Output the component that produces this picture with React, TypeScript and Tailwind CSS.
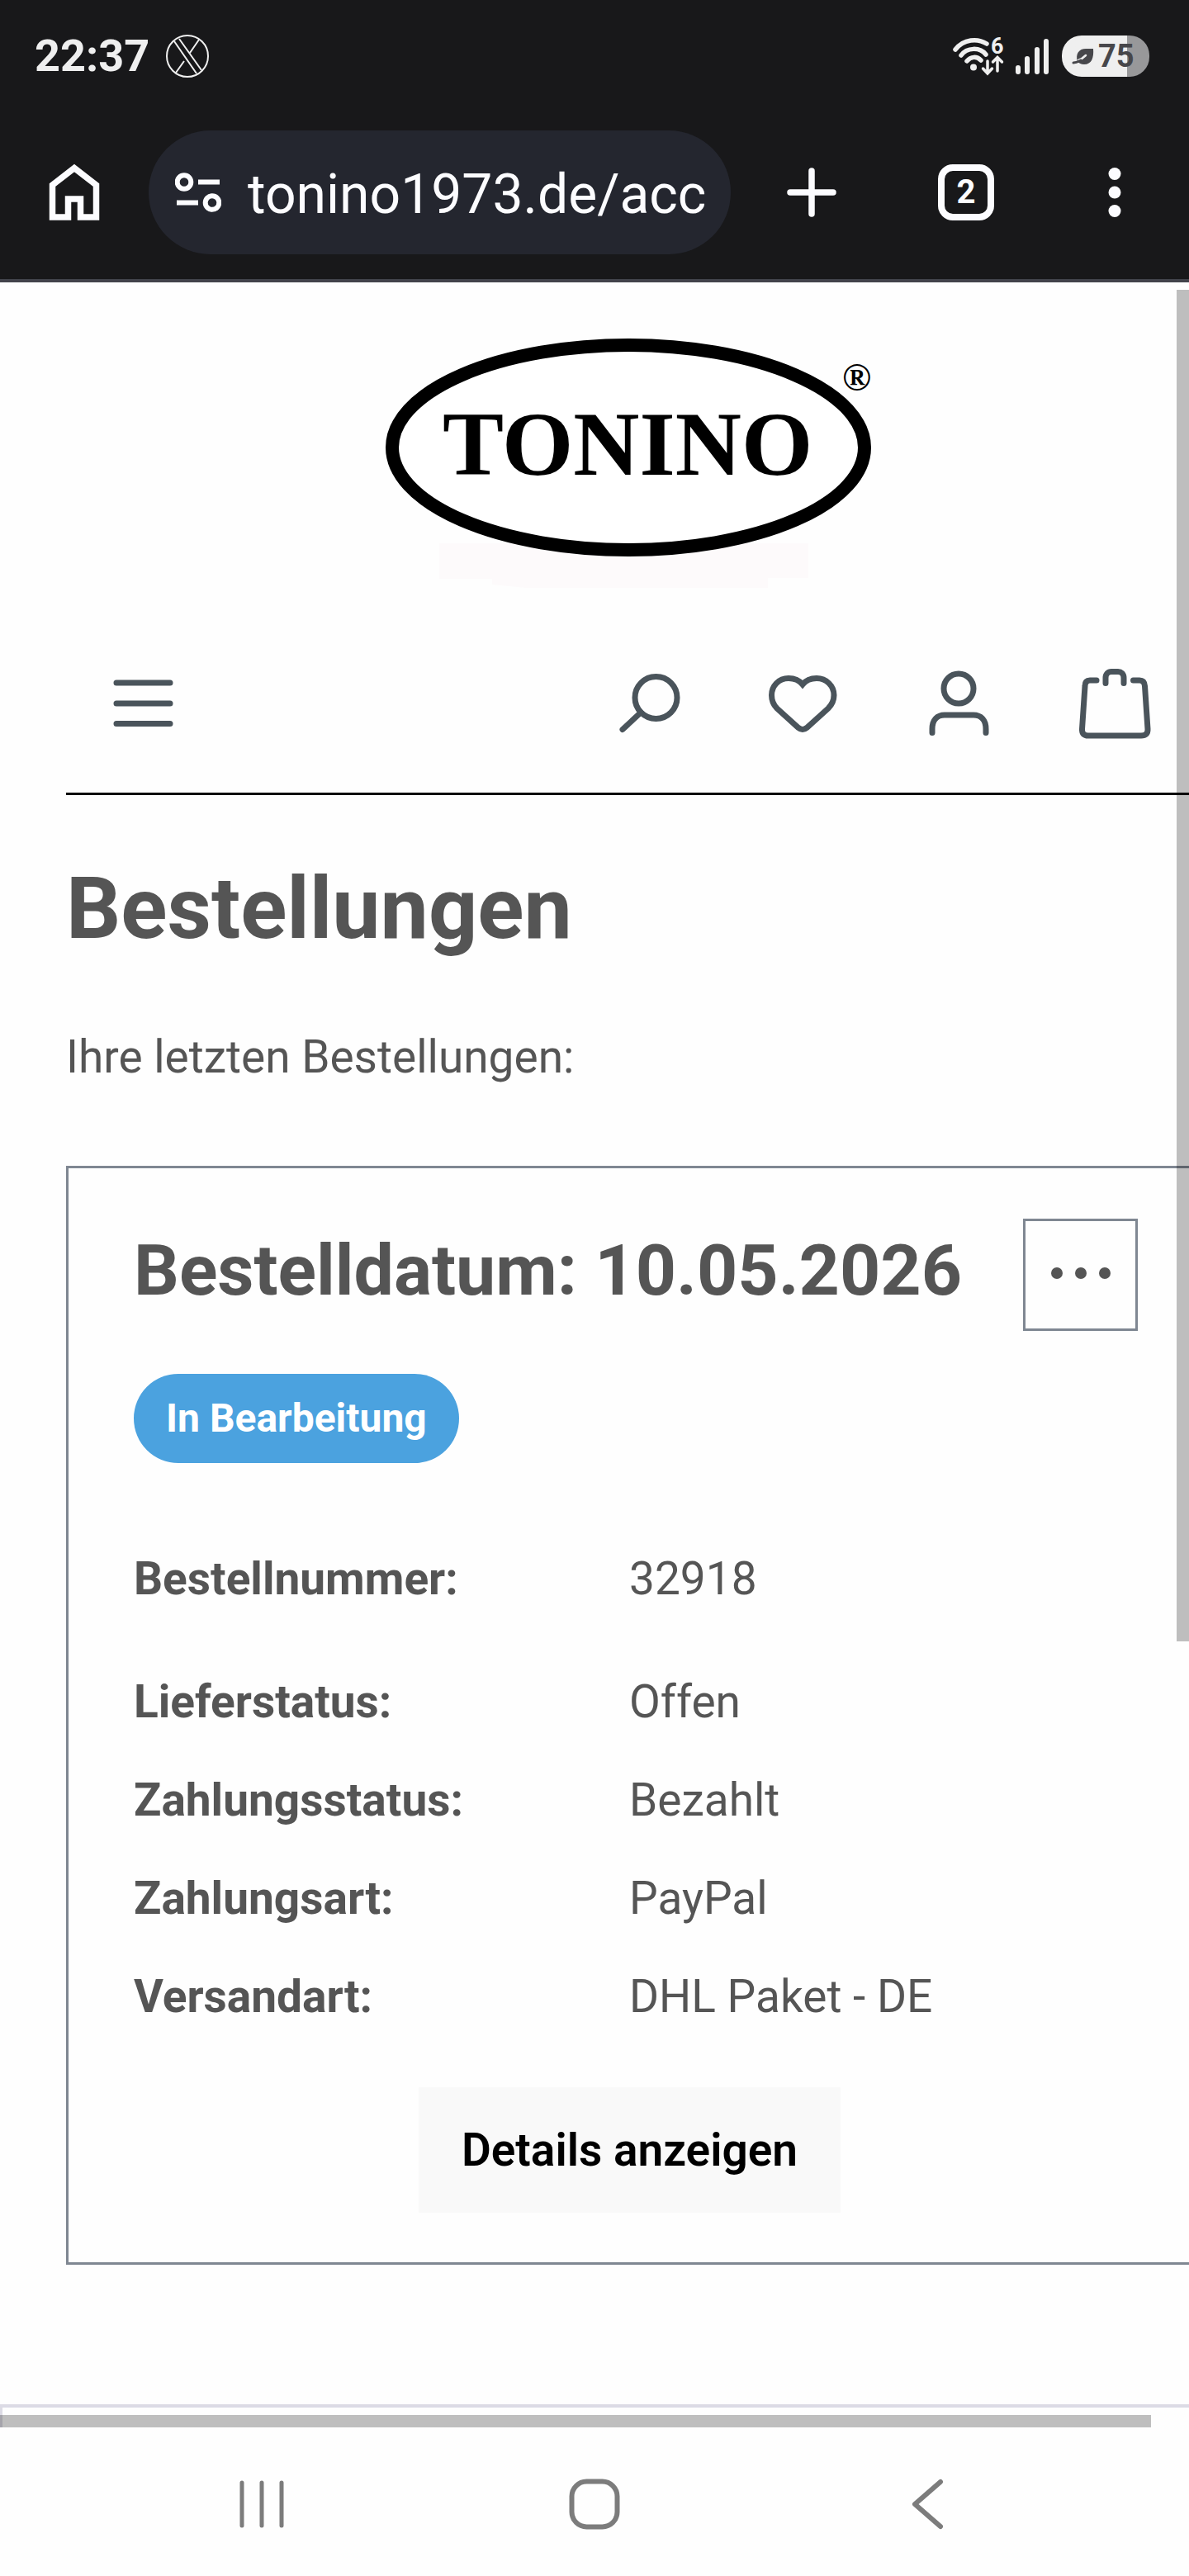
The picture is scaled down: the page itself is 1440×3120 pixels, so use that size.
const details = [
  { label: "Lieferstatus:", value: "Offen" },
  { label: "Zahlungsstatus:", value: "Bezahlt" },
  { label: "Zahlungsart:", value: "PayPal" },
  { label: "Versandart:", value: "DHL Paket - DE" },
];

const StatusBar = () => {
  return (
    <div className="flex h-32 items-center justify-between bg-[#18181a] pt-2 pr-12 pl-[42px] text-[#efefef]">
      <div className="flex items-center gap-5">
        <span className="text-[54px] leading-[64px] font-bold">22:37</span>
        <svg className="size-[52px]" viewBox="0 0 52 52" fill="none" stroke="currentColor" strokeWidth="2">
          <circle cx="26" cy="26" r="25" />
          <path d="M10 8 L37 47 M16 5 L43 43 M40 6 L29 22 M12 46 L22 32" />
        </svg>
      </div>

      <div className="flex items-center gap-[15px]">
        {/* Wifi + signal */}
        <div className="flex items-center gap-2">
          <svg className="h-16 w-[68px]" viewBox="0 -8 68 64" fill="none" stroke="currentColor" strokeWidth="5.5" strokeLinecap="round">
            <path d="M4 16 C14 3 31 2 42 9" />
            <path d="M11 23 C18 13 34 13 41 22" />
            <path d="M18 30 C23 24 30 24 35 29" />
            <circle cx="26" cy="37.5" r="4" fill="currentColor" stroke="none" />
            <path d="M43 30 V44 M37.5 39 L43 45 L48.5 39" strokeWidth="3.5" />
            <path d="M55 42 V27 M49.5 31 L55 25.5 L60.5 31" strokeWidth="3.5" />
            <text x="47" y="21" fill="currentColor" stroke="none" fontSize="27" fontWeight="700">6</text>
          </svg>
          <svg className="h-12 w-[42px]" viewBox="0 0 42 48" stroke="currentColor" strokeWidth="6" strokeLinecap="round">
            <path d="M4 38 V43 M15 27 V43 M27 16 V43 M38 6 V43" />
          </svg>
        </div>

        {/* Battery */}
        <div className="flex h-[50px] w-[106px] items-center gap-1 rounded-3xl bg-linear-to-r from-[#efefef] from-75% to-[#98989a] to-75% pl-3 text-[#47474b]">
          <svg className="h-6 w-7" viewBox="0 0 28 24" fill="currentColor">
            <path d="M26 3 C27 14 24 22 15 22 C11 22 9 20 7 19 C4 9 9 3 17 3 Z" />
            <path d="M17 11 C14 14 11 16 8 17" fill="none" stroke="#efefef" strokeWidth="2.5" strokeLinecap="round" />
            <path d="M2 20 C6 20 9 18 11 17" fill="none" stroke="currentColor" strokeWidth="3" strokeLinecap="round" />
          </svg>
          <span className="text-[38px] leading-[48px] font-bold">75</span>
        </div>
      </div>
    </div>
  );
};

const BrowserBar = () => {
  return (
    <div className="flex h-[214px] items-center border-b-4 border-[#42434b] bg-[#18181a] text-[#fcfcff]">
      <button aria-label="Startseite" className="flex w-[180px] shrink-0 justify-center">
        <svg className="size-[72px]" viewBox="0 0 72 72" fill="none" stroke="currentColor" strokeWidth="7.5">
          <path d="M9.5 66 V27 L36 6.5 L62.5 27 V66 H43.5 V44 H28.5 V66 Z" />
        </svg>
      </button>

      <div className="flex h-[150px] min-w-0 flex-1 items-center gap-8 rounded-full bg-[#24262f] pr-6 pl-8">
        <svg className="size-14 shrink-0" viewBox="0 0 56 56" fill="none" stroke="currentColor" strokeWidth="6">
          <circle cx="11" cy="15.5" r="8.3" />
          <circle cx="45" cy="40.5" r="8.3" />
          <path d="M28 15.5 H54 M2 40.5 H28" />
        </svg>
        <input
          aria-label="Adresse"
          defaultValue="tonino1973.de/acc"
          className="h-24 w-full min-w-0 bg-transparent pt-1 text-[66px] outline-none"
        />
      </div>

      <button aria-label="Neuer Tab" className="flex w-[196px] shrink-0 justify-center">
        <svg className="size-16" viewBox="0 0 64 64" stroke="currentColor" strokeWidth="7.5" strokeLinecap="round">
          <path d="M32 6 V58 M6 32 H58" />
        </svg>
      </button>
      <button aria-label="Tabs" className="flex w-[178px] shrink-0 justify-center">
        <span className="flex size-[68px] items-center justify-center rounded-[18px] border-8 border-current text-[40px] leading-[48px] font-bold">
          2
        </span>
      </button>
      <button aria-label="Menü" className="flex w-[181px] shrink-0 justify-center">
        <svg className="size-16" viewBox="0 0 64 64" fill="currentColor">
          <circle cx="32" cy="9.5" r="7.5" />
          <circle cx="32" cy="32" r="7.5" />
          <circle cx="32" cy="54.5" r="7.5" />
        </svg>
      </button>
    </div>
  );
};

const Logo = () => {
  return (
    <svg className="h-80 w-[604px]" viewBox="460 400 604 320" role="img" aria-label="Tonino">
      <path d="M533 658 H980 V700 H931 V712 H638 L597 708 V701 H533 Z" fill="#fdfafb" />
      <ellipse cx="762" cy="542" rx="286" ry="124" fill="#fff" stroke="#000" strokeWidth="16" />
      <text x="537" y="575" fontFamily="'Liberation Serif', serif" fontWeight="700" fontSize="111">TONINO</text>
      <text x="1021" y="473" fontFamily="'Liberation Serif', serif" fontWeight="700" fontSize="47">®</text>
    </svg>
  );
};

const ShopButton = ({ label, children }: any) => {
  return (
    <button aria-label={label} className="flex w-[124px] justify-center">
      <svg
        className="size-24"
        viewBox="0 0 96 96"
        fill="none"
        stroke="currentColor"
        strokeWidth="7"
        strokeLinecap="round"
        strokeLinejoin="round"
      >
        {children}
      </svg>
    </button>
  );
};

const ShopNav = () => {
  return (
    <nav className="ml-20 flex h-[243px] items-center justify-between border-b-[3px] border-black pt-6 pr-7 pl-8 text-[#4a545b]">
      <ShopButton label="Menü">
        <path d="M15 23 H80 M15 48 H80 M15 72.5 H80" />
      </ShopButton>
      <div className="flex gap-16">
        <ShopButton label="Suchen">
          <circle cx="56.5" cy="41" r="25.5" />
          <path d="M38 59 L16 79.5" />
        </ShopButton>
        <ShopButton label="Merkzettel">
          <path
            strokeLinejoin="miter"
            d="M46 25 C42 20 36 17.5 29 17.5 C17 17.5 8.5 27 8.5 38 C8.5 45 11 50 15 54 L41 77.5 Q46 81.5 51 77.5 L77 54 C81 50 84 45 84 38 C84 27 75 17.5 63 17.5 C56 17.5 50 20 46 25 Z"
          />
        </ShopButton>
        <ShopButton label="Mein Konto">
          <circle cx="47" cy="30" r="18" />
          <path d="M15 83.5 V79 C15 68 21 62 30 62 H65 C74 62 80 68 80 79 V83.5" />
        </ShopButton>
        <ShopButton label="Warenkorb">
          <path d="M26 20 H18 Q12 20 12 27 L8.5 79 Q8 87 16 87 H80 Q88.5 87 88 79 L84.5 27 Q84 20 78 20 H70.5" />
          <path d="M37 23.5 V17 C37 12 40 9.5 44 9.5 H52 C56 9.5 59 12 59 17 V23.5" />
        </ShopButton>
      </div>
    </nav>
  );
};

const OrderCard = () => {
  return (
    <section className="mt-[92px] border-y-[3px] border-l-[3px] border-[#7f8792] pt-[61px] pb-[60px] pl-[79px]">
      <div className="flex items-start justify-between pr-[62px]">
        <h2 className="text-[86px] leading-[126px] font-bold">Bestelldatum: 10.05.2026</h2>
        <button
          aria-label="Weitere Aktionen"
          className="flex h-[136px] w-[139px] shrink-0 items-center justify-center border-[3px] border-[#7f8792]"
        >
          <svg className="h-5 w-20" viewBox="0 0 80 20" fill="currentColor">
            <circle cx="11" cy="8" r="7" />
            <circle cx="40" cy="8" r="7" />
            <circle cx="69" cy="8" r="7" />
          </svg>
        </button>
      </div>

      <span className="mt-[52px] flex h-[108px] w-fit items-center rounded-full bg-[#4ba2df] px-[39px] text-[48px] leading-[56px] font-bold text-white">
        In Bearbeitung
      </span>

      <dl className="mt-[100px] text-[55px] leading-[80px]">
        <div className="mb-[69px] flex">
          <dt className="w-[600px] font-bold">Bestellnummer:</dt>
          <dd>32918</dd>
        </div>
        <div className="flex flex-col gap-[39px]">
          {details.map((item) => (
            <div key={item.label} className="flex">
              <dt className="w-[600px] font-bold">{item.label}</dt>
              <dd>{item.value}</dd>
            </div>
          ))}
        </div>
      </dl>

      {/* Details */}
      <div className="mt-[70px] flex justify-center pr-[77px]">
        <button className="bg-[#f9f9f9] px-[52px] py-9 text-[55px] leading-[80px] font-semibold text-black">
          Details anzeigen
        </button>
      </div>
    </section>
  );
};

const NavBar = () => {
  return (
    <div className="flex h-[180px] items-center justify-around px-[115px] pt-1.5 text-[#7c7c7c]">
      <button aria-label="Letzte Apps" className="flex justify-center">
        <svg className="size-16" viewBox="0 0 64 64" stroke="currentColor" strokeWidth="5" strokeLinecap="round">
          <path d="M8 6 V58 M32 6 V58 M56 6 V58" />
        </svg>
      </button>
      <button aria-label="Startbildschirm" className="flex justify-center">
        <svg className="size-16" viewBox="0 0 64 64" fill="none" stroke="currentColor" strokeWidth="6">
          <rect x="4.5" y="4.5" width="55" height="55" rx="18" />
        </svg>
      </button>
      <button aria-label="Zurück" className="flex justify-center">
        <svg className="size-16" viewBox="0 0 64 64" fill="none" stroke="currentColor" strokeWidth="6" strokeLinecap="round" strokeLinejoin="round">
          <path d="M48 5 L17 32 L48 59" />
        </svg>
      </button>
    </div>
  );
};

const App = () => {
  return (
    <div className="flex min-h-screen flex-col overflow-hidden bg-[#fefefe] font-[Roboto,sans-serif] text-[#555]">
      <StatusBar />
      <BrowserBar />

      <div className="relative flex flex-1 flex-col">
        <header>
          <div className="flex justify-center pt-[58px] pl-[82px]">
            <Logo />
          </div>
          <ShopNav />
        </header>

        <main className="flex-1 pl-20">
          <h1 className="pt-[78px] text-[104px] leading-[120px] font-bold">Bestellungen</h1>
          <p className="mt-[79px] text-[55px] leading-[80px]">Ihre letzten Bestellungen:</p>
          <OrderCard />
        </main>

        <footer className="mt-[168px] h-7 border-t-4 border-l-[3px] border-[#dcdbe5]" />

        {/* Scrollbars */}
        <div className="absolute top-[9px] right-0 h-[63%] w-[15px] bg-black/25" />
        <div className="absolute bottom-0 left-0 h-[15px] w-[calc(100%-46px)] bg-black/25" />
      </div>

      <NavBar />
    </div>
  );
};

export default App;
